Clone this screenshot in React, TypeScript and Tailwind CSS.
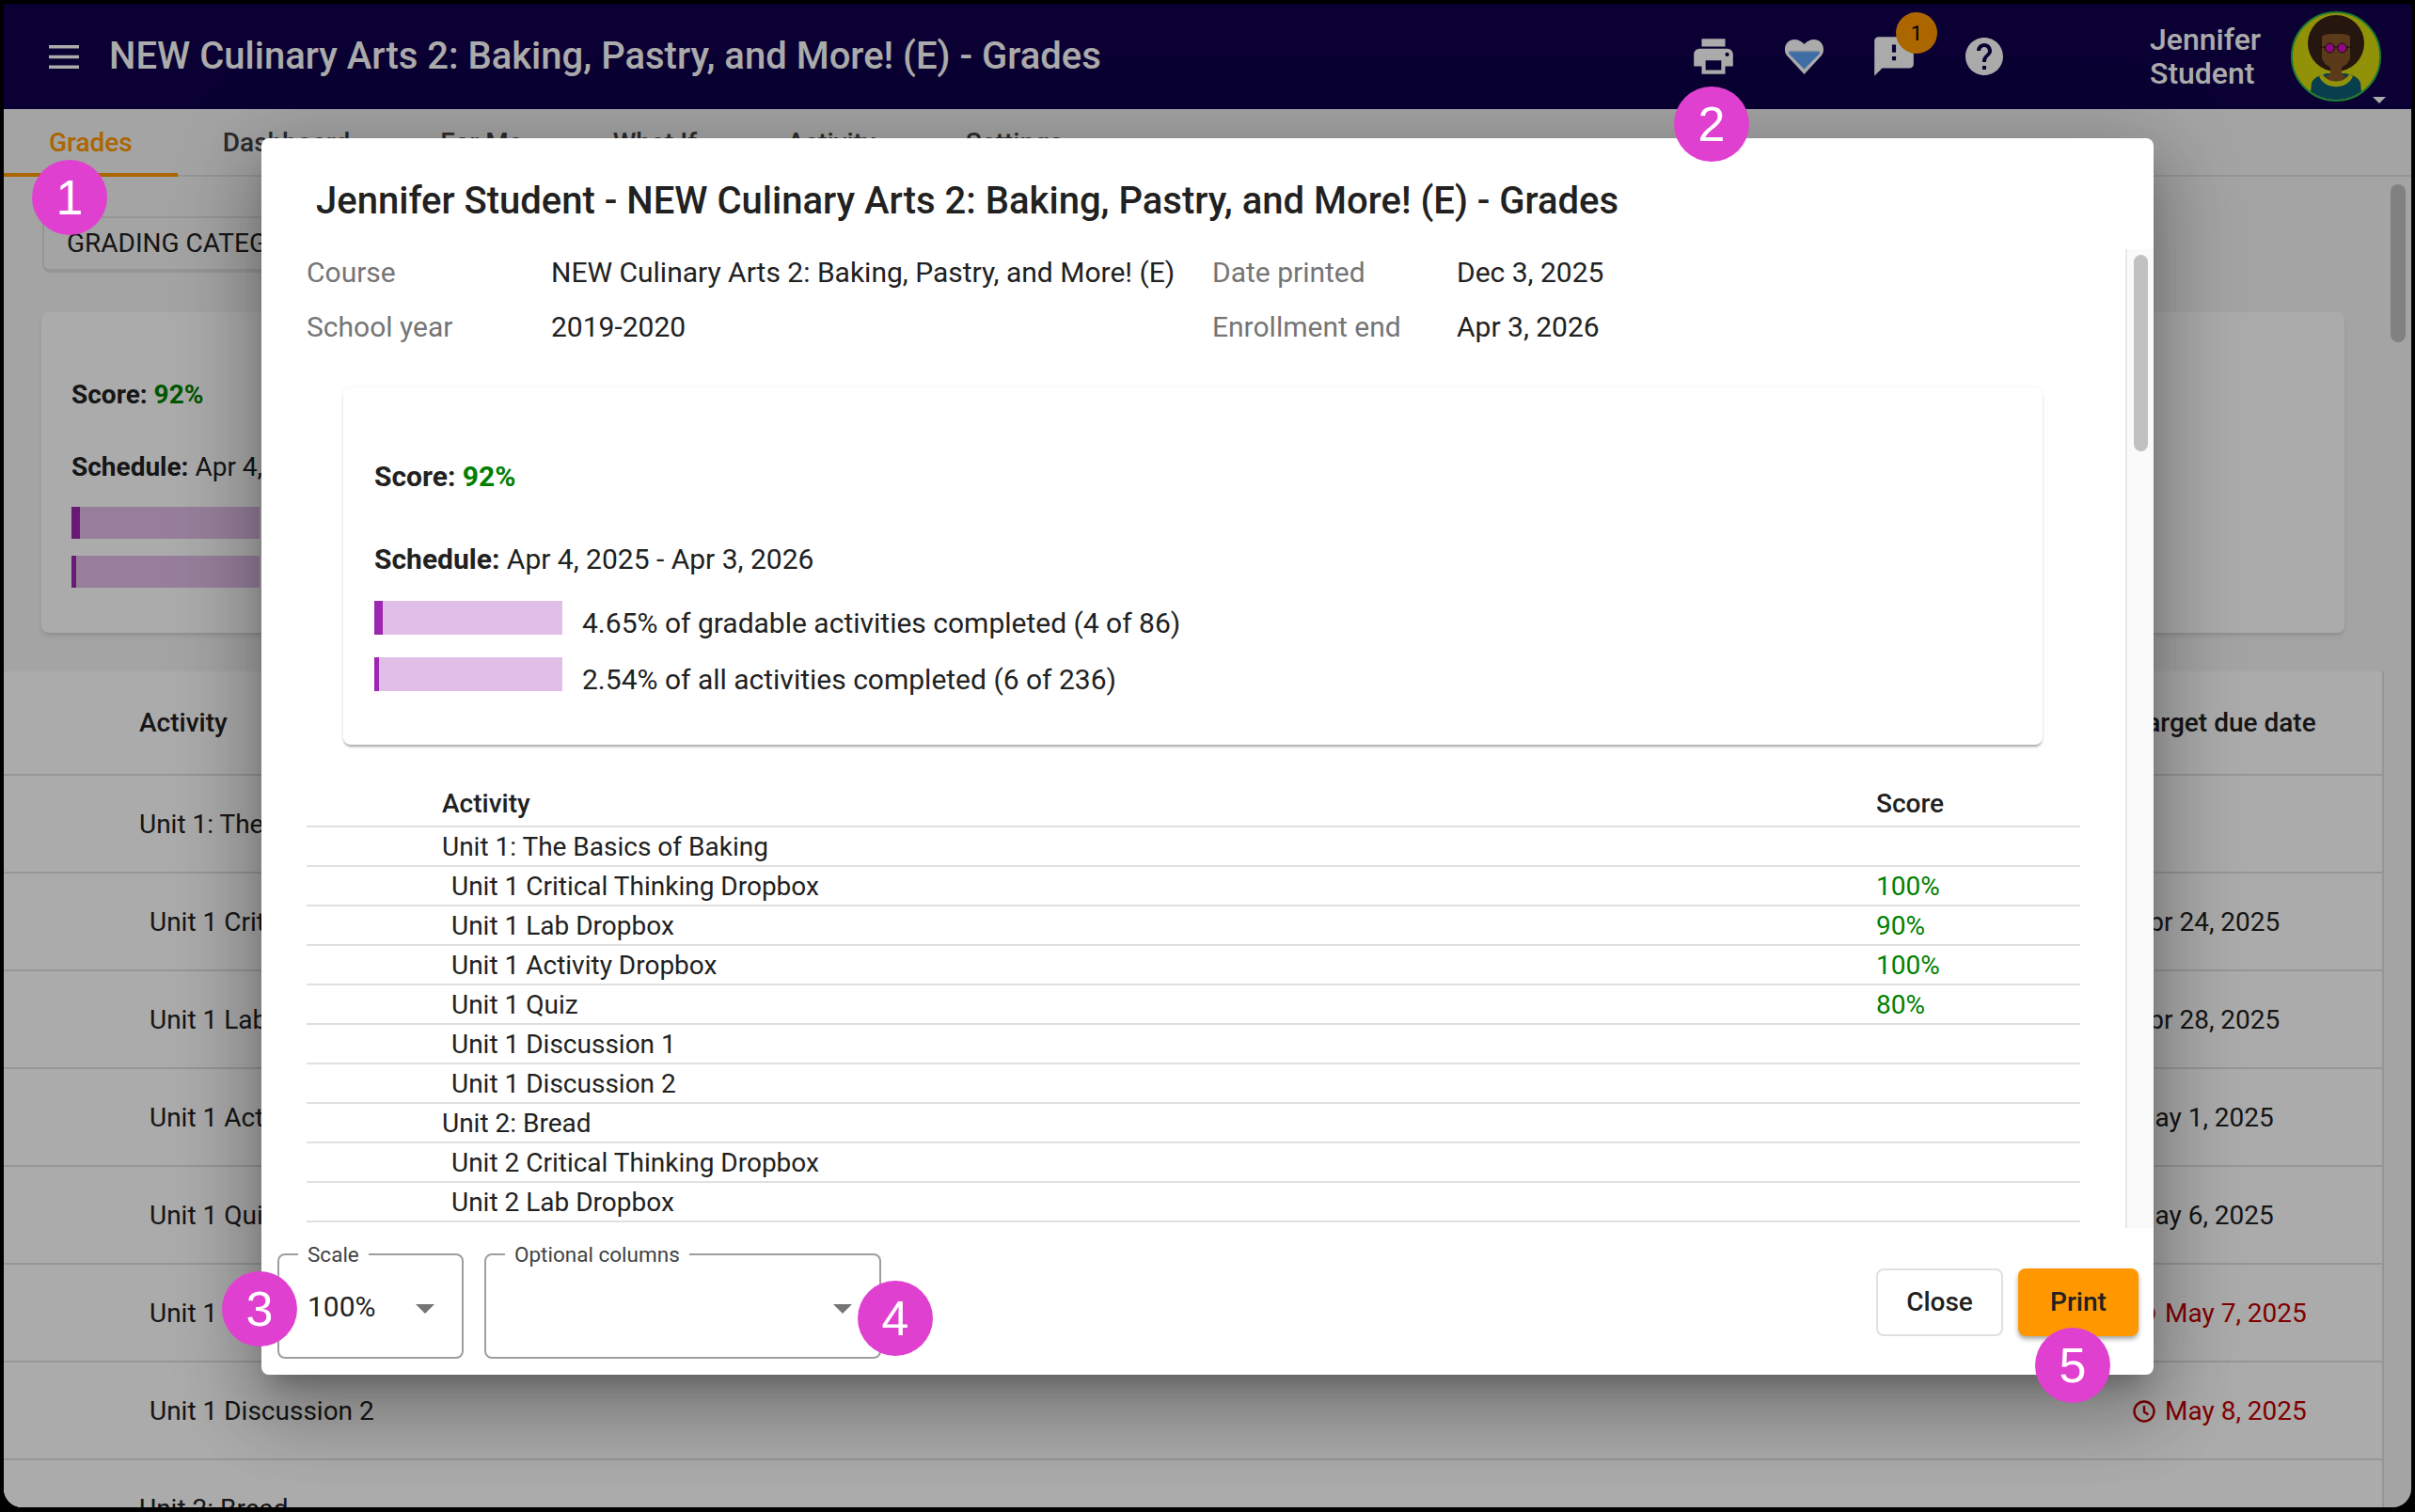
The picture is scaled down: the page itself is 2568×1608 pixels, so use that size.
const font = { fontFamily: "Roboto, 'Noto Sans', sans-serif" };

const pageRows = [
  { label: "Unit 1: The Basics of Baking", unit: true },
  { label: "Unit 1 Critical Thinking Dropbox", date: "Apr 24, 2025" },
  { label: "Unit 1 Lab Dropbox", date: "Apr 28, 2025" },
  { label: "Unit 1 Activity Dropbox", date: "May 1, 2025" },
  { label: "Unit 1 Quiz", date: "May 6, 2025" },
  { label: "Unit 1 Discussion 1", date: "May 7, 2025", late: true },
  { label: "Unit 1 Discussion 2", date: "May 8, 2025", late: true },
  { label: "Unit 2: Bread", unit: true },
];

const printRows = [
  { label: "Unit 1: The Basics of Baking", unit: true },
  { label: "Unit 1 Critical Thinking Dropbox", score: "100%" },
  { label: "Unit 1 Lab Dropbox", score: "90%" },
  { label: "Unit 1 Activity Dropbox", score: "100%" },
  { label: "Unit 1 Quiz", score: "80%" },
  { label: "Unit 1 Discussion 1" },
  { label: "Unit 1 Discussion 2" },
  { label: "Unit 2: Bread", unit: true },
  { label: "Unit 2 Critical Thinking Dropbox" },
  { label: "Unit 2 Lab Dropbox" },
];

const callouts = [
  { n: "1", cls: "left-[34px] top-[170px]" },
  { n: "2", cls: "left-[1780px] top-[92px]" },
  { n: "3", cls: "left-[236px] top-[1352px]" },
  { n: "4", cls: "left-[912px] top-[1362px]" },
  { n: "5", cls: "left-[2164px] top-[1412px]" },
];

const Icon = ({ d, className }: { d: string; className: string }) => (
  <svg viewBox="0 0 24 24" className={className} fill="currentColor">
    <path d={d} />
  </svg>
);

const Avatar = () => (
  <svg viewBox="0 0 96 96" className="w-[96px] h-[96px] block">
    <defs>
      <clipPath id="avatar-clip">
        <circle cx="48" cy="48" r="46" />
      </clipPath>
    </defs>
    <circle cx="48" cy="48" r="47" fill="#dada0c" stroke="#2db64b" strokeWidth="2" />
    <g clipPath="url(#avatar-clip)">
      <path d="M20 96 L22 76 C24 70 32 68 38 66 L58 66 C66 68 72 70 74 76 L76 96 Z" fill="#0c5f77" />
      <path d="M34 67 C38 76 58 76 62 67 L66 69 C60 84 36 84 30 69 Z" fill="#dada0c" />
      <ellipse cx="48" cy="34" rx="30" ry="30" fill="#3a2118" />
      <path d="M33 28 C33 25 36 24 48 24 C60 24 63 25 63 28 L63 50 C60 58 54 60 48 60 C42 60 36 58 33 50 Z" fill="#885728" />
      <path d="M42 58 H54 V66 C56 68 58 70 60 70 C54 76 42 76 36 70 C38 70 40 68 42 66 Z" fill="#885728" />
      <circle cx="41.5" cy="39" r="5" fill="#cf0fbf" stroke="#1a0f0a" strokeWidth="1" />
      <circle cx="54.5" cy="39" r="5" fill="#cf0fbf" stroke="#1a0f0a" strokeWidth="1" />
      <path d="M30 38 H36 M46 38 H50 M60 38 H66" stroke="#1a0f0a" strokeWidth="1.2" />
    </g>
  </svg>
);

const Progress = ({ pct, text }: { pct: number; text: string }) => (
  <div className="flex items-start h-[36px]">
    <div className="w-[200px] h-[36px] bg-[#e1bee7]">
      <div className="h-full bg-[#9c27b0]" style={{ width: `${pct}%` }} />
    </div>
    <span className="ml-[21px] mt-[6px] leading-[36px] whitespace-nowrap">{text}</span>
  </div>
);

const Background = () => (
  <div className="h-full flex flex-col rounded-b-[20px] overflow-hidden bg-[#f5f5f5] text-[28px] text-[#212121]">
    <header className="h-[112px] shrink-0 flex items-center bg-[#0f004c] text-white">
      <svg viewBox="0 0 32 25" className="ml-[48px] w-[32px] h-[25px]" fill="currentColor">
        <rect width="32" height="3.5" y="0" />
        <rect width="32" height="3.5" y="10.75" />
        <rect width="32" height="3.5" y="21.5" />
      </svg>
      <h1 className="ml-[32px] text-[40px] font-medium whitespace-nowrap">
        NEW Culinary Arts 2: Baking, Pastry, and More! (E) - Grades
      </h1>
      <div className="ml-auto flex items-center">
        <button className="w-[96px] flex justify-center">
          <Icon className="w-[50px] h-[50px]" d="M19 8H5c-1.66 0-3 1.34-3 3v6h4v4h12v-4h4v-6c0-1.66-1.34-3-3-3zm-3 11H8v-5h8v5zm3-7c-.55 0-1-.45-1-1s.45-1 1-1 1 .45 1 1-.45 1-1 1zm-1-9H6v4h12V3z" />
        </button>
        <button className="w-[96px] flex justify-center">
          <svg viewBox="0 0 41 37" className="w-[41px] h-[37px]">
            <path d="M20.5 37 L3 18 C0 15 0 12 0 10 C0 4 5 0 10 0 C14 0 18 2 20.5 5 C23 2 27 0 31 0 C36 0 41 4 41 10 C41 12 41 15 38 18 Z" fill="#fff" />
            <path d="M4 14 Q4 12 6 12 H35 Q37 12 37 14 C37 15 36 16 35 17 L20.5 31.5 L6 17 C5 16 4 15 4 14 Z" fill="#5fa4fa" />
            <rect x="5" y="12" width="31" height="1.5" fill="#a6c8f0" />
          </svg>
        </button>
        <button className="relative w-[96px] flex justify-center">
          <Icon className="w-[50px] h-[50px]" d="M20 2H4c-1.1 0-1.99.9-1.99 2L2 22l4-4h14c1.1 0 2-.9 2-2V4c0-1.1-.9-2-2-2zm-7 12h-2v-2h2v2zm0-4h-2V6h2v4z" />
          <span className="absolute left-[50px] top-[-22px] w-[44px] h-[44px] rounded-full bg-[#ff9800] text-black text-[22px] flex items-center justify-center">
            1
          </span>
        </button>
        <button className="w-[96px] flex justify-center">
          <Icon className="w-[48px] h-[48px]" d="M12 2C6.48 2 2 6.48 2 12s4.48 10 10 10 10-4.48 10-10S17.52 2 12 2zm1 17h-2v-2h2v2zm2.07-7.75l-.9.92C13.45 12.9 13 13.5 13 15h-2v-.5c0-1.1.45-2.1 1.17-2.83l1.24-1.26c.37-.36.59-.86.59-1.41 0-1.1-.9-2-2-2s-2 .9-2 2H8c0-2.21 1.79-4 4-4s4 1.79 4 4c0 .88-.36 1.68-.93 2.25z" />
        </button>
        <div className="ml-[128px] w-[150px] text-[32px] font-medium leading-[36px]">
          Jennifer
          <br />
          Student
        </div>
        <div className="relative mr-[32px]">
          <Avatar />
          <svg viewBox="0 0 14 7" className="absolute left-[87px] top-[91px] w-[14px] h-[7px]" fill="#fff">
            <path d="M0 0 H14 L7 7 Z" />
          </svg>
        </div>
      </div>
    </header>

    <nav className="h-[72px] shrink-0 flex border-b-2 border-[#e0e0e0] font-medium pt-[2px]">
      <div className="relative px-[48px] flex items-center text-[#ff9800]">
        Grades
        <span className="absolute left-0 right-0 bottom-[-2px] h-[4px] bg-[#ff9800]" />
      </div>
      {["Dashboard", "For Me", "What If", "Activity", "Settings"].map((t) => (
        <div key={t} className="px-[48px] flex items-center text-[#424242]">
          {t}
        </div>
      ))}
    </nav>

    <div className="flex-1 flex min-h-0">
      <main className="flex-1 min-w-0">
        <div className="ml-[41px] mt-[42px] w-[560px] h-[60px] border-2 border-b-4 border-[#e0e0e0] rounded-lg flex items-center pl-[24px]">
          GRADING CATEGORIES
        </div>
        <section className="ml-[40px] mt-[42px] w-[2449px] h-[341px] bg-white rounded-lg shadow-md pl-[32px] pt-[66px]">
          <div className="h-[44px] leading-[44px] font-bold">
            Score: <span className="text-[#008000]">92%</span>
          </div>
          <div className="mt-[33px] h-[44px] leading-[44px]">
            <b className="font-bold">Schedule:</b> Apr 4, 2025 - Apr 3, 2026
          </div>
          <div className="mt-[20px] flex flex-col gap-[18px]">
            <div className="w-[200px] h-[34px] bg-[#e1bee7]">
              <div className="h-full w-[9px] bg-[#9c27b0]" />
            </div>
            <div className="w-[200px] h-[34px] bg-[#e1bee7]">
              <div className="h-full w-[5px] bg-[#9c27b0]" />
            </div>
          </div>
        </section>
        <section className="mt-[41px] bg-white border-r-2 border-[#e0e0e0]">
          <div className="h-[111px] grid grid-cols-[2263px_1fr] items-center border-b-2 border-[#e0e0e0] font-medium">
            <span className="pl-[144px]">Activity</span>
            <span>Target due date</span>
          </div>
          {pageRows.map((r) => (
            <div key={r.label} className="h-[104px] pt-[2px] grid grid-cols-[2263px_1fr] items-center border-b-2 border-[#e0e0e0]">
              <span className={r.unit ? "pl-[144px]" : "pl-[155px]"}>{r.label}</span>
              {r.late ? (
                <span className="ml-[1px] flex items-center gap-[10px] text-[#bf0000]">
                  <svg viewBox="0 0 24 24" className="w-[24px] h-[24px]" fill="none" stroke="currentColor" strokeWidth="2.4">
                    <circle cx="12" cy="12" r="10.5" />
                    <path d="M12 6v6.5l4.5 3" />
                  </svg>
                  {r.date}
                </span>
              ) : (
                <span>{r.date}</span>
              )}
            </div>
          ))}
        </section>
      </main>
      <div className="w-[29px] shrink-0 pt-[8px] flex justify-center">
        <div className="w-[16px] h-[168px] rounded-full bg-[#c1c1c1]" />
      </div>
    </div>
  </div>
);

const Field = ({ label, className, children }: { label: string; className: string; children?: React.ReactNode }) => (
  <fieldset className={`${className} h-[123px] border-2 border-[#9e9e9e] rounded-lg`}>
    <legend className="ml-[20px] px-[10px] text-[22.5px] leading-[24px] text-[#424242]">{label}</legend>
    <div className="h-[97px] flex items-start">
      <span className="ml-[30px] mt-[26px] leading-[36px] text-[30px]">{children}</span>
      <svg viewBox="0 0 20 10" className="ml-auto mr-[29px] mt-[41px] w-[20px] h-[10px]" fill="#757575">
        <path d="M0 0 H20 L10 10 Z" />
      </svg>
    </div>
  </fieldset>
);

const PrintDialog = () => (
  <div className="absolute left-[278px] top-[147px] w-[2012px] h-[1315px] bg-white rounded-lg flex flex-col text-[#212121] text-[30px] shadow-[0_38px_76px_8px_rgba(0,0,0,0.2),0_15px_92px_14px_rgba(0,0,0,0.15),0_18px_25px_-12px_rgba(0,0,0,0.25)]">
    <h2 className="h-[118px] shrink-0 pl-[58px] pt-[43px] text-[40px] leading-[48px] font-medium whitespace-nowrap">
      Jennifer Student - NEW Culinary Arts 2: Baking, Pastry, and More! (E) - Grades
    </h2>
    <div className="h-[1041px] shrink-0 flex overflow-hidden">
      <div className="flex-1 min-w-0 pl-[48px]">
        <div className="flex flex-col gap-[8px]">
          <div className="h-[49px] flex items-center">
            <span className="w-[260px] text-[#757575]">Course</span>
            <span className="w-[703px]">NEW Culinary Arts 2: Baking, Pastry, and More! (E)</span>
            <span className="w-[260px] text-[#757575]">Date printed</span>
            <span>Dec 3, 2025</span>
          </div>
          <div className="h-[50px] flex items-center">
            <span className="w-[260px] text-[#757575]">School year</span>
            <span className="w-[703px]">2019-2020</span>
            <span className="w-[260px] text-[#757575]">Enrollment end</span>
            <span>Apr 3, 2026</span>
          </div>
        </div>
        <section className="ml-[39px] mt-[40px] w-[1807px] h-[380px] rounded-lg pl-[33px] pt-[73px] shadow-[0_3px_3px_-1px_rgba(0,0,0,0.35),0_0_4px_rgba(0,0,0,0.06)]">
          <div className="h-[44px] leading-[44px] font-bold">
            Score: <span className="text-[#008000]">92%</span>
          </div>
          <div className="mt-[44px] h-[44px] leading-[44px]">
            <b className="font-bold">Schedule:</b> Apr 4, 2025 - Apr 3, 2026
          </div>
          <div className="mt-[22px] flex flex-col gap-[24px]">
            <Progress pct={4.65} text="4.65% of gradable activities completed (4 of 86)" />
            <Progress pct={2.54} text="2.54% of all activities completed (6 of 236)" />
          </div>
        </section>
        <div className="mt-[38px] w-[1886px] text-[28px]">
          <div className="h-[50px] pt-[2px] grid grid-cols-[1669px_1fr] items-center border-b-2 border-[#e0e0e0] font-medium">
            <span className="pl-[144px]">Activity</span>
            <span>Score</span>
          </div>
          {printRows.map((r) => (
            <div key={r.label} className="h-[42px] grid grid-cols-[1669px_1fr] items-center border-b-2 border-[#e0e0e0]">
              <span className={r.unit ? "pl-[144px]" : "pl-[154px]"}>{r.label}</span>
              <span className="text-[#008000]">{r.score}</span>
            </div>
          ))}
        </div>
      </div>
      <div className="w-[30px] shrink-0 bg-[#fafafa] border-l-2 border-[#e8e8e8] pt-[6px] flex justify-center">
        <div className="w-[15px] h-[209px] rounded-full bg-[#c1c1c1]" />
      </div>
    </div>
    <div className="flex-1 flex items-start pl-[17px] pr-[16px] pt-[16px]">
      <Field label="Scale" className="w-[198px]">100%</Field>
      <Field label="Optional columns" className="w-[422px] ml-[22px]" />
      <button className="ml-auto mt-[27px] w-[135px] h-[72px] border-2 border-[#e0e0e0] rounded-lg bg-white text-[28px] font-medium">
        Close
      </button>
      <button className="ml-[16px] mt-[27px] w-[128px] h-[72px] rounded-lg bg-[#ff9800] text-[28px] font-medium shadow-[0_3px_5px_rgba(0,0,0,0.35)]">
        Print
      </button>
    </div>
  </div>
);

export default function App() {
  return (
    <div className="relative w-[2568px] h-[1608px] bg-black overflow-hidden pt-[4px] pl-[4px] pr-[4px] pb-[5px]" style={font}>
      <div className="relative h-full">
        <Background />
        <div className="absolute inset-0 rounded-b-[20px] bg-[rgba(0,0,0,0.33)]" />
      </div>
      <PrintDialog />
      {callouts.map((c) => (
        <div
          key={c.n}
          className={`absolute ${c.cls} w-[80px] h-[80px] rounded-full bg-[#e040d0] text-white text-[52px] flex items-center justify-center`}
          style={{ fontFamily: "'Liberation Sans', sans-serif" }}
        >
          {c.n}
        </div>
      ))}
    </div>
  );
}
